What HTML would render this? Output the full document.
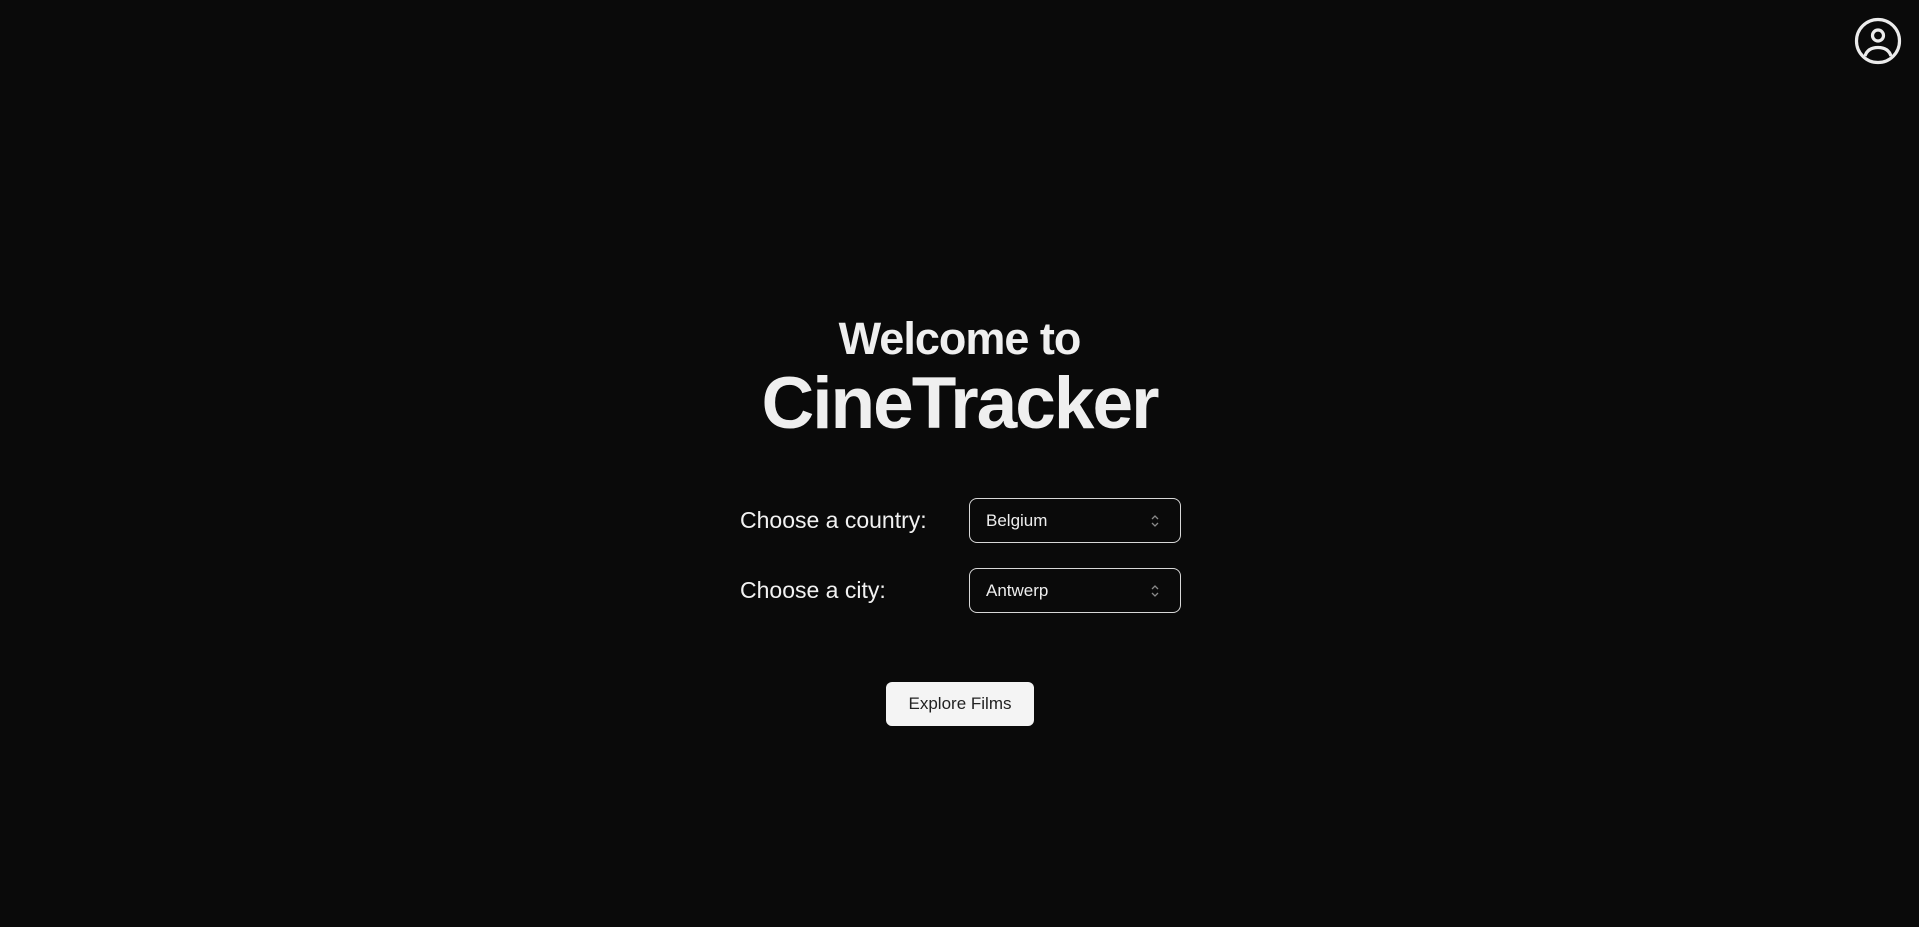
<!DOCTYPE html>
<html><head><meta charset="utf-8"><style>
html,body{margin:0;padding:0;width:1919px;height:927px;background:#0a0a0a;overflow:hidden;font-family:"Liberation Sans","DejaVu Sans",sans-serif;color:#f0f0f0}
.abs{position:absolute}
h1{position:absolute;margin:0;left:0;width:1919px;text-align:center;font-weight:bold;color:#efefef;white-space:nowrap}
.lab{position:absolute;left:740px;font-size:23px;color:#f2f2f2}
.sel{position:absolute;left:969px;width:212px;height:45px;border:1.5px solid #d8d8d8;border-radius:8px;box-sizing:border-box}
.sel span{position:absolute;left:16px;top:12px;font-size:17px;color:#eee}
.sel svg{position:absolute;right:20px;top:15px}
.btn{position:absolute;left:886px;top:682px;width:148px;height:44px;background:#f4f4f4;border-radius:6px;color:#222;font-size:17px;text-align:center;line-height:44px}
</style></head><body>
<svg class="abs" style="left:1852px;top:15px" width="52" height="52" viewBox="0 0 52 52" fill="none" stroke="#ececec" stroke-width="3.2">
<circle cx="26" cy="26" r="21.5"/><circle cx="26" cy="20.5" r="5.5"/><path d="M13 41 C15 35 20 32.5 26 32.5 C32 32.5 37 35 39 41"/></svg>
<h1 style="top:313px;font-size:45px;letter-spacing:-1px">Welcome to</h1>
<h1 style="top:362px;font-size:73px;letter-spacing:-2px">CineTracker</h1>
<div class="lab" style="top:507px">Choose a country:</div>
<div class="sel" style="top:498px"><span>Belgium</span><svg width="10" height="14" viewBox="0 0 10 14" fill="none" stroke="#8a8a8a" stroke-width="1.3"><path d="M2 5 L5 2 L8 5 M2 9 L5 12 L8 9"/></svg></div>
<div class="lab" style="top:577px">Choose a city:</div>
<div class="sel" style="top:568px"><span>Antwerp</span><svg width="10" height="14" viewBox="0 0 10 14" fill="none" stroke="#8a8a8a" stroke-width="1.3"><path d="M2 5 L5 2 L8 5 M2 9 L5 12 L8 9"/></svg></div>
<div class="btn">Explore Films</div>
</body></html>
